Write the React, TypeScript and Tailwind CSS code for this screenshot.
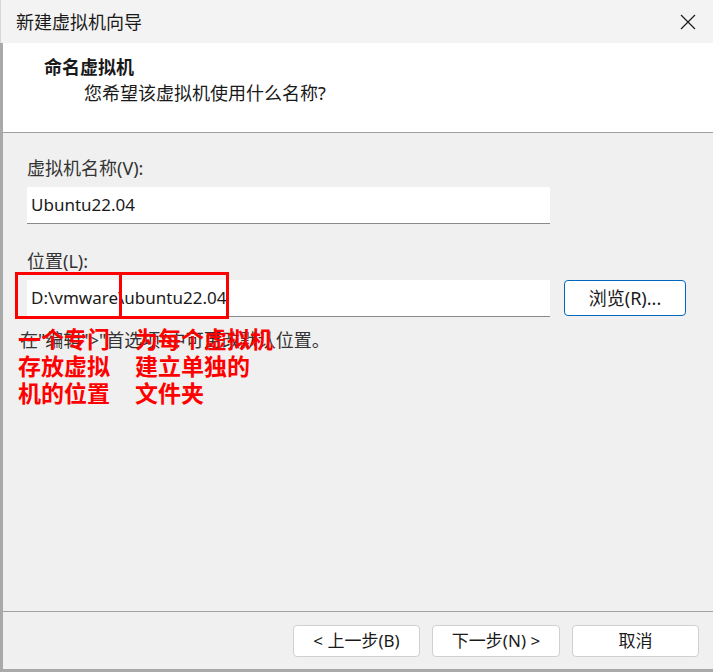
import React from 'react';

const font = { fontFamily: '"Noto Sans", "Noto Sans CJK SC", sans-serif' };

const WizardButton: React.FC<{ label: string; className?: string }> = ({ label, className = '' }) => (
  <button
    className={`h-[32px] w-[127px] bg-white border border-[#d0d0d0] rounded-[4px] text-[17px] text-[#1a1a1a] flex items-center justify-center ${className}`}
  >
    {label}
  </button>
);

export default function App() {
  return (
    <div className="w-[713px] h-[672px] flex flex-col bg-[#f0f0f0] text-[#1a1a1a] overflow-hidden" style={font}>
      {/* title bar */}
      <div className="h-[43px] shrink-0 bg-[#f3f3f3] flex items-center justify-between pl-[15px] pr-[16px] border-l border-[#d8d8d8]">
        <span className="text-[18px] leading-[24px] text-[#1a1a1a]">新建虚拟机向导</span>
        <svg width="16" height="16" viewBox="0 0 16 16" className="mr-[1px]">
          <path d="M1 1 L15 15 M15 1 L1 15" stroke="#1a1a1a" strokeWidth="1.2" fill="none" />
        </svg>
      </div>

      <div className="flex-1 flex flex-col border-l-[3px] border-b-[3px] border-[#a9a9a9] relative">
        {/* header */}
        <div className="h-[90px] shrink-0 bg-white border-b border-[#a0a0a0] flex flex-col pl-[41px] pt-[12px]">
          <div className="text-[18px] font-bold leading-[24px]">命名虚拟机</div>
          <div className="text-[18px] leading-[24px] pl-[40px] mt-[2px]">您希望该虚拟机使用什么名称?</div>
        </div>

        {/* body */}
        <div className="flex-1 flex flex-col pl-[24px] pr-[26px] pt-[23px]">
          <div className="text-[18px] leading-[24px] text-[#333]">虚拟机名称(V):</div>
          <div className="mt-[7px] w-[523px] h-[37px] bg-white border-b border-[#8a8a8a] flex items-center pl-[4px] text-[17px]">
            Ubuntu22.04
          </div>

          <div className="mt-[25px] text-[18px] leading-[24px] text-[#333]">位置(L):</div>
          <div className="mt-[7px] flex items-start gap-[14px]">
            <div className="w-[523px] h-[37px] bg-white border-b border-[#8a8a8a] flex items-center pl-[4px] text-[17px]">
              D:\vmware\ubuntu22.04
            </div>
            <button className="w-[122px] h-[36px] bg-white border border-[#0067c0] rounded-[4px] text-[18px] flex items-center justify-center">
              浏览(R)...
            </button>
          </div>
          <div className="mt-[11px] -ml-[7px] text-[18px] leading-[24px] text-[#333]">在"编辑"&gt;"首选项"中可更改默认位置。</div>
        </div>

        {/* footer */}
        <div className="h-[58px] shrink-0 border-t border-[#a0a0a0] flex items-start justify-end gap-[12px] pr-[14px] pt-[13px]">
          <WizardButton label="< 上一步(B)" />
          <WizardButton label="下一步(N) >" className="w-[128px]" />
          <WizardButton label="取消" />
        </div>

        {/* red annotations */}
        <div className="absolute left-[12px] top-[229px] w-[107px] h-[47px] border-[3px] border-[#ff0000]" />
        <div className="absolute left-[116px] top-[229px] w-[110px] h-[47px] border-[3px] border-[#ff0000]" />
        <div className="absolute left-[15px] top-[283px] text-[23px] font-bold leading-[27px] text-[#ff0000]">
          <div>一个专门</div>
          <div>存放虚拟</div>
          <div>机的位置</div>
        </div>
        <div className="absolute left-[132px] top-[283px] text-[23px] font-bold leading-[27px] text-[#ff0000]">
          <div>为每个虚拟机</div>
          <div>建立单独的</div>
          <div>文件夹</div>
        </div>
      </div>
    </div>
  );
}
